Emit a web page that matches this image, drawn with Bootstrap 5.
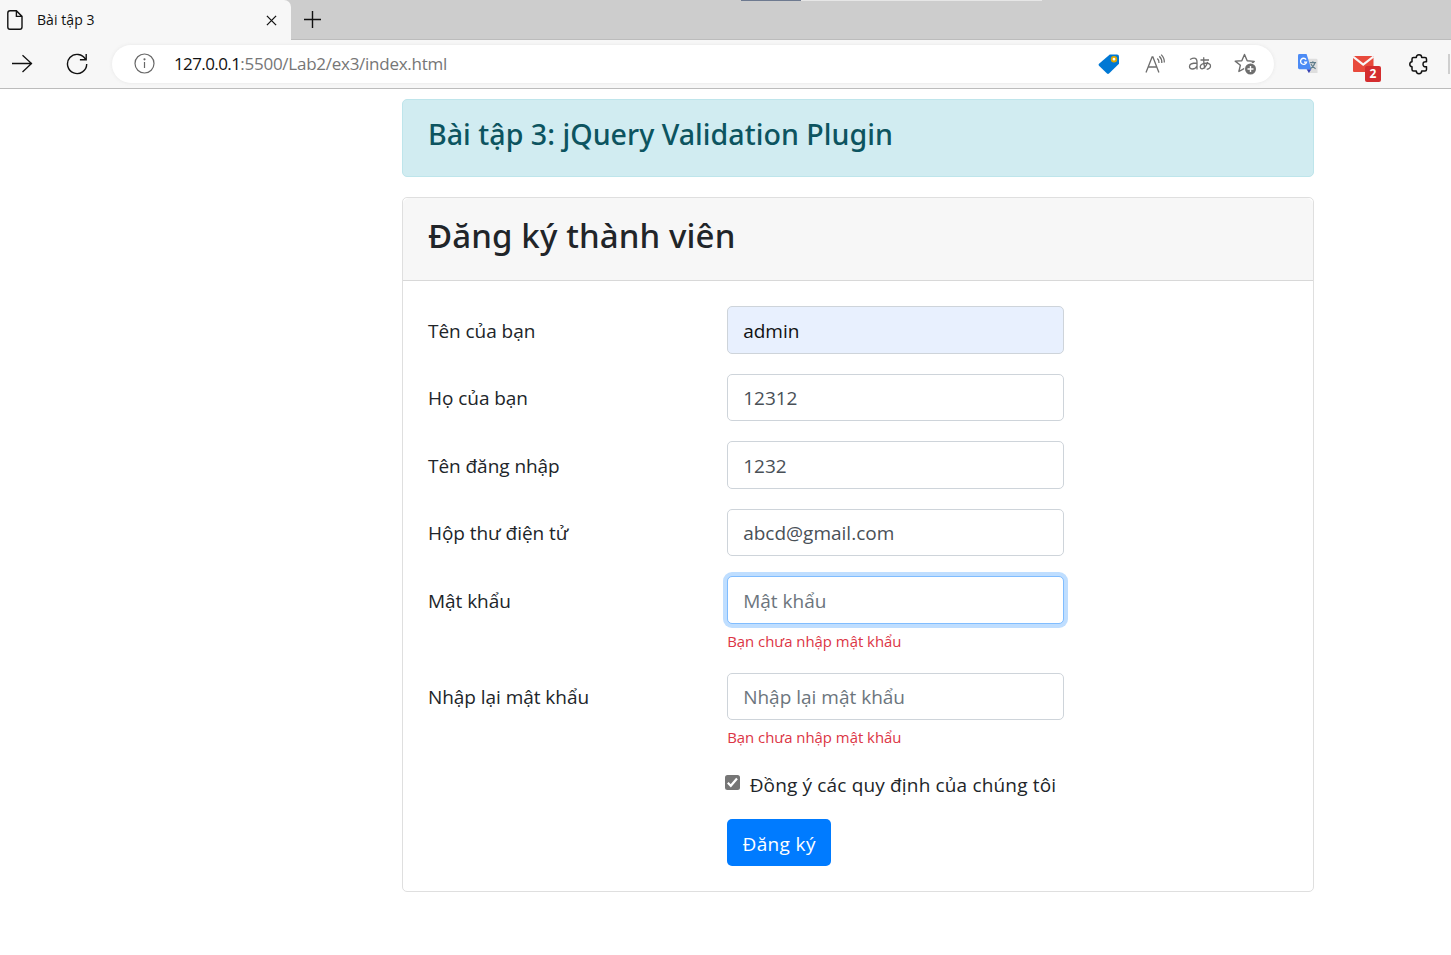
<!DOCTYPE html>
<html lang="vi">
<head>
<meta charset="utf-8">
<meta name="viewport" content="width=device-width, initial-scale=1">
<title>Bài tập 3</title>
<link href="https://cdn.jsdelivr.net/npm/bootstrap@5.3.0/dist/css/bootstrap.min.css" rel="stylesheet">
<style>
html{font-size:20px}
body{font-family:"Open Sans","Noto Sans",sans-serif;font-size:19px;line-height:30px;color:#212529;background:#fff;overflow:hidden;height:955px}
svg{display:block;flex:none}
.tab-strip{height:40px;background:#cdcdcd;box-shadow:inset 0 -1px #bcbcbc}
.tab-active{width:291px;height:40px;background:#f7f7f7;border-top-right-radius:7px;padding:0 12px 0 7px;font-size:14px;color:#111}
.tab-active span{margin-left:14px;line-height:40px;letter-spacing:.07px}
.tab-close{margin-right:2px}
.new-tab{height:40px;margin-left:-1px;padding-left:14px;padding-top:11px}
.load-track{width:301px;height:1px;background:#e6e6e6;margin-left:420px}
.load-fill{width:60px;height:1px;background:#6e7a90}
.tool-bar{height:49px;background:#f7f7f7;border-bottom:1px solid #bcbcbc;padding-left:11px}
.reload{margin-left:33px}
.address{width:1162px;height:38px;margin:0 0 1px 23px;border-radius:19px;background:#fff;box-shadow:0 0 3px 1px #ededed;padding:0 17px 0 22px}
.url{font-size:17px;color:#767676;margin-left:19px;letter-spacing:-.26px;white-space:pre}
.url b{font-weight:400;color:#111;letter-spacing:-.6px}
.count{position:absolute;left:12px;top:11px;width:16px;height:16px;border-radius:2px;background:#d42d2f;color:#fff;font:700 12px/16px "Open Sans",sans-serif;text-align:center}
.edge{width:2px;height:20px;background:#cfcfcf;margin-left:19px}
.content-box{width:912px;margin:10px 0 0 402px}
.alert-teal{height:78px;padding:16px 25px 14px;margin-bottom:20px;background:#d1ecf1;border:1px solid #bee5eb;border-radius:5px;color:#0c5460}
.alert-teal h4,.signup h3{font-family:"Noto Sans",sans-serif;font-weight:500}
.alert-teal h4{font-size:28.6px;line-height:36px;margin:0;letter-spacing:.02px}
.signup{border:1px solid #dfdfdf;border-radius:5px;height:695px}
.signup .card-header{height:83px;padding:17px 25px 13px;background:#f7f7f7;border-bottom:1px solid #d8d8d8}
.signup h3{font-size:33px;line-height:42px;margin:0;letter-spacing:.12px}
.signup .card-body{padding:25px}
.form-line{--bs-gutter-x:37.5px;margin-bottom:20px}
.form-line .col-form-label{padding-top:9.5px;padding-bottom:7.5px;line-height:30px;letter-spacing:-.05px}
.form-line .form-control{height:47.5px;padding:8.500px 15px 6.500px;font-size:19px;line-height:30px;border:1px solid #ced4da;border-radius:5px;color:#495057}
.form-line .form-control::placeholder{color:#6c757d}
.form-line .filled{background:#e8f0fe;color:#111}
.form-line .active-field{border-color:#80bdff;box-shadow:0 0 0 4px #bfdeff}
.error-text{margin-top:5px;height:24px;font-size:14.9px;line-height:25px;color:#dc3545}
.agree{height:30px;margin-left:-2px;letter-spacing:.16px;white-space:nowrap}
.agree span{padding-top:1px}
.agree svg{margin:6px 9.500px 0 0}
.signup .btn{width:104px;height:47px;padding:3px 15px 0;font-size:19px;border:0;border-radius:5px;background:#007bff;letter-spacing:.35px;white-space:nowrap}
</style>
</head>
<body>
<header>
  <div class="tab-strip d-flex">
    <div class="tab-active d-flex align-items-center">
      <svg width="16" height="20" viewBox="0 0 16 20" fill="none" stroke="#111" stroke-width="1.4"><path d="M3 .8h6.4l5.6 5.6V17q0 2.2-2.2 2.2H3Q.8 19.200.8 17V3Q.8.800 3 .8zM9.400.8V6.400H15"/></svg>
      <span>Bài tập 3</span>
      <svg class="tab-close ms-auto" width="11" height="11" viewBox="0 0 12 12" stroke="#111" stroke-width="1.4"><path d="M1 1l10 10M11 1L1 11"/></svg>
    </div>
    <div class="new-tab"><svg width="17" height="17" viewBox="0 0 17 17" stroke="#111" stroke-width="1.4"><path d="M0 8.500h17M8.500 0v17"/></svg></div>
    <div class="load-track"><div class="load-fill"></div></div>
  </div>
  <div class="tool-bar d-flex align-items-center">
    <svg width="22" height="20" viewBox="0 0 22 20" fill="none" stroke="#111" stroke-width="1.300"><path d="M1 9.500h20M11.500 1.200L20.500 9.500l-9 8.500"/></svg>
    <svg class="reload" width="23" height="22" viewBox="0 0 23 22" fill="none" stroke="#111" stroke-width="1.400"><path d="M19.600 6.500A9.600 9.600 0 1 0 20.700 11M20.200 1v5.800h-6.300"/></svg>
    <div class="address d-flex align-items-center">
      <svg width="21" height="21" viewBox="0 0 21 21" fill="none" stroke="#686868" stroke-width="1.200"><circle cx="10.500" cy="10.500" r="9.500"/><path d="M10.500 9v6"/><circle cx="10.500" cy="6.300" r=".5" fill="#686868"/></svg>
      <div class="url"><b>127.0.0.1</b>:5500/Lab2/ex3/index.html</div>
      <svg class="ms-auto" width="22" height="22" viewBox="0 0 22 22"><path d="M11.800 1.500h7.200q2 0 2 2v7.200L11 20.500q-1 .8-2 0L1 12.700q-1-1 0-2z" fill="#0078d4"/><circle cx="16" cy="6.200" r="2.300" fill="#fff" stroke="#e0a800" stroke-width="1.800"/></svg>
      <svg style="margin-left:25px" width="21" height="20" viewBox="0 0 21 20" fill="none" stroke="#6e6e6e" stroke-width="1.300"><path d="M1 18.500L7.100 3h.8l6 15.500M3.200 13h8.800M12.300 4.500q2 1.800 1.700 4.500M14.300 2.300q2.800 2.800 2.500 6.700M16.200.6q3.500 3.500 3.100 7.900"/></svg>
      <svg style="margin-left:22px" width="24" height="18" viewBox="0 0 24 18" fill="none" stroke="#6e6e6e" stroke-width="1.300"><path d="M2 4.500Q9 1 9 7v7.500M9 8Q1.500 8 1.500 11.500q0 2.500 3 2.500 3 0 4.500-3M12.500 5h8.500M15.700 2.200q-.3 7 1.200 11.300M19.700 7q-2 6-5.500 6.800-2.200 0-1.900-2.500 1-2.900 6-3.100 4.200.2 4.200 2.900 0 2.700-3.800 3.200"/></svg>
      <svg style="margin-left:22px" width="23" height="22" viewBox="0 0 23 22" fill="none"><path d="M10.500 1.500l2.700 6.200 7 .7-5.300 4.600 1 5.500-5.400-3.200-5.600 3.200 1.500-6.300L1.200 8.100l6.600-.4z" stroke="#6e6e6e" stroke-width="1.400" stroke-linejoin="round"/><circle cx="16.500" cy="16" r="6.300" fill="#fff"/><circle cx="16.500" cy="16" r="5.500" fill="#6e6e6e"/><path d="M13.500 16h6M16.500 13v6" stroke="#fff" stroke-width="1.400"/></svg>
    </div>
    <svg style="margin-left:24px" width="20" height="20" viewBox="0 0 21 21"><path d="M7 5h12q1.500 0 1.500 1.500V20H11z" fill="#dedede"/><path d="M9 16h5l-2.500 4z" fill="#3541b5"/><path d="M1.500 0H9l5 16H1.500Q0 16 0 14.500v-13Q0 0 1.500 0z" fill="#4c8bf5"/><path d="M8.500 5.800A3.200 3.200 0 1 0 9 8.500H6.300" fill="none" stroke="#fff" stroke-width="1.400"/><path d="M12.500 9h6.500M15.600 7.500V9M17.800 9q-1 4-5 6.500M13.600 10.500q1.500 3.200 4.900 5" fill="none" stroke="#607d8b" stroke-width="1.200"/></svg>
    <div class="position-relative" style="margin-left:35px">
      <svg width="21" height="18" viewBox="0 0 21 18"><rect y="1" width="20.500" height="16" rx="1" fill="#e84a3c"/><path d="M0 1.500l10.200 8L20.500 1.500" fill="none" stroke="#f7f7f7" stroke-width="2.200"/></svg>
      <span class="count">2</span>
    </div>
    <svg style="margin-left:35px" width="20" height="21" viewBox="0 0 20 21" fill="none" stroke="#111" stroke-width="1.500" stroke-linejoin="round"><path d="M4.500 3.500h2.800Q7.300.8 10 .8t2.700 2.700H16q1.500 0 1.500 1.500v2.700Q14 7.300 14 10.200t3.500 2.500V15.500q0 1.500-1.500 1.500h-3.300q0 2.700-2.700 2.700T7.300 17H4.500Q3 17 3 15.500v-2.700Q.8 12.500.8 10.200T3 7.700V5Q3 3.500 4.500 3.500z"/></svg>
    <div class="edge"></div>
  </div>
</header>
<main class="content-box">
  <div class="alert alert-teal"><h4>Bài tập 3: jQuery Validation Plugin</h4></div>
  <div class="card signup">
    <div class="card-header"><h3>Đăng ký thành viên</h3></div>
    <form class="card-body">
      <div class="row form-line">
        <label class="col-4 col-form-label" for="firstname">Tên của bạn</label>
        <div class="col-5"><input class="form-control filled" id="firstname" value="admin"></div>
      </div>
      <div class="row form-line">
        <label class="col-4 col-form-label" for="lastname">Họ của bạn</label>
        <div class="col-5"><input class="form-control" id="lastname" value="12312"></div>
      </div>
      <div class="row form-line">
        <label class="col-4 col-form-label" for="username">Tên đăng nhập</label>
        <div class="col-5"><input class="form-control" id="username" value="1232"></div>
      </div>
      <div class="row form-line">
        <label class="col-4 col-form-label" for="email">Hộp thư điện tử</label>
        <div class="col-5"><input class="form-control" id="email" value="abcd@gmail.com"></div>
      </div>
      <div class="row form-line">
        <label class="col-4 col-form-label" for="password">Mật khẩu</label>
        <div class="col-5"><input type="password" class="form-control active-field" id="password" placeholder="Mật khẩu">
          <div class="error-text">Bạn chưa nhập mật khẩu</div></div>
      </div>
      <div class="row form-line">
        <label class="col-4 col-form-label" for="confirm">Nhập lại mật khẩu</label>
        <div class="col-5"><input type="password" class="form-control" id="confirm" placeholder="Nhập lại mật khẩu">
          <div class="error-text">Bạn chưa nhập mật khẩu</div></div>
      </div>
      <div class="row form-line">
        <div class="col-5 offset-4"><div class="agree d-flex"><svg width="15" height="15" viewBox="0 0 15 15"><rect width="15" height="15" rx="2.500" fill="#767676"/><path d="M2.800 7.800l3 3L12 3.500" fill="none" stroke="#fff" stroke-width="2.200"/></svg><span>Đồng ý các quy định của chúng tôi</span></div></div>
      </div>
      <div class="row form-line mb-0">
        <div class="col-5 offset-4"><button type="button" class="btn btn-primary">Đăng ký</button></div>
      </div>
    </form>
  </div>
</main>
<script src="https://cdn.jsdelivr.net/npm/bootstrap@5.3.0/dist/js/bootstrap.bundle.min.js"></script>
</body>
</html>
